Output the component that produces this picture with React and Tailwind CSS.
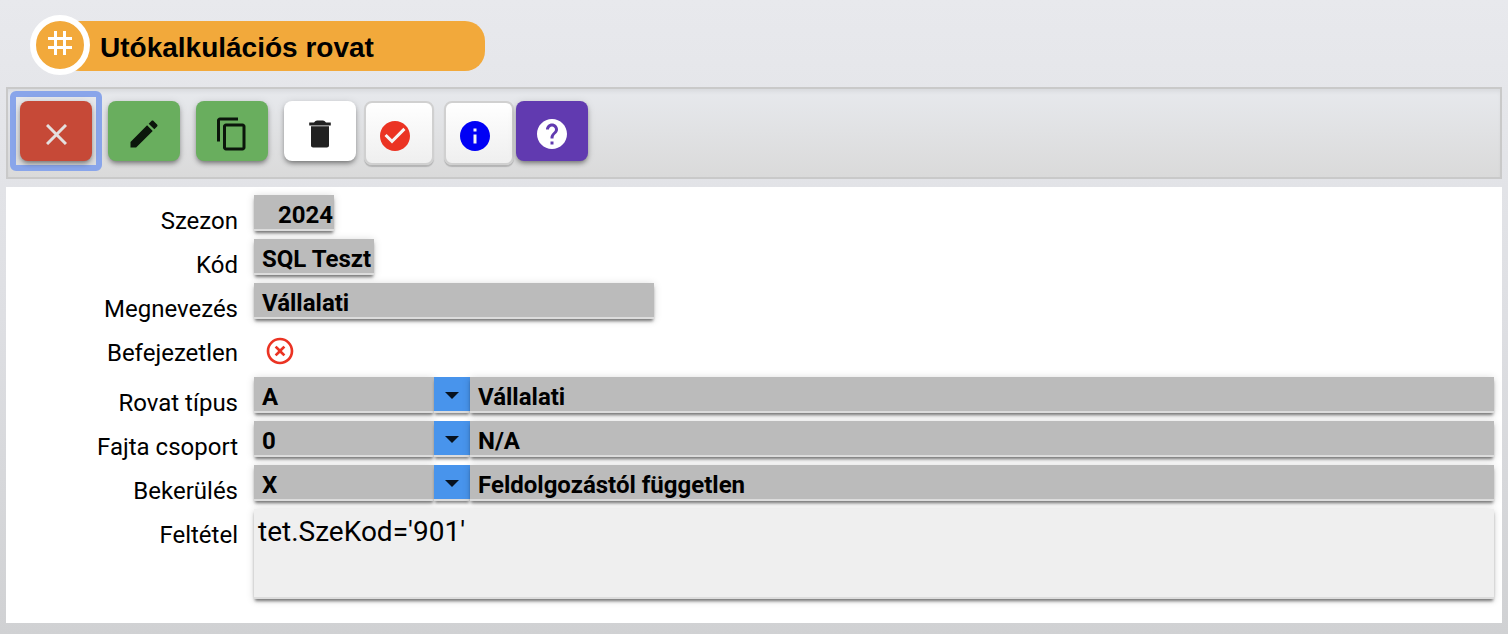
import React from "react";

const FIELD_SHADOW = "shadow-[0_3px_3px_-1px_rgba(0,0,0,0.5),0_1px_8px_rgba(0,0,0,0.16)]";

const ICONS = {
  edit: "M3 17.25V21h3.75L17.81 9.94l-3.75-3.75L3 17.25zM20.71 7.04c.39-.39.39-1.02 0-1.41l-2.34-2.34c-.39-.39-1.02-.39-1.41 0l-1.83 1.83 3.75 3.75 1.83-1.83z",
  copy: "M16 1H4c-1.1 0-2 .9-2 2v14h2V3h12V1zm3 4H8c-1.1 0-2 .9-2 2v14c0 1.1.9 2 2 2h11c1.1 0 2-.9 2-2V7c0-1.1-.9-2-2-2zm0 16H8V7h11v14z",
  trash: "M6 19.700c0 .8.6 1.300 1.400 1.300h9.200c.8 0 1.400-.5 1.400-1.300V6.900H6v12.800zM19.200 4.400H16C15.400 3.500 14.600 3 14 3h-4c-.6 0-1.400.5-2 1.400H4.800v1.900h14.400V4.400z",
  check: "M12 2C6.48 2 2 6.48 2 12s4.48 10 10 10 10-4.480 10-10S17.520 2 12 2zm-2 15l-5-5 1.410-1.410L10 14.170l7.590-7.590L19 8l-9 9z",
  info: "M12 2C6.480 2 2 6.480 2 12s4.480 10 10 10 10-4.480 10-10S17.520 2 12 2zm1 15h-2v-6h2v6zm0-8h-2V7h2v2z",
  help: "M12 2C6.480 2 2 6.480 2 12s4.480 10 10 10 10-4.480 10-10S17.520 2 12 2zm1 17h-2v-2h2v2zm2.070-7.750l-.9.920C13.450 12.900 13 13.500 13 15h-2v-.5c0-1.100.450-2.100 1.170-2.830l1.240-1.260c.370-.360.590-.860.590-1.410 0-1.100-.9-2-2-2s-2 .9-2 2H8c0-2.210 1.790-4 4-4s4 1.790 4 4c0 .880-.360 1.680-.930 2.250z",
  off: "M14.590 8L12 10.590 9.410 8 8 9.410 10.590 12 8 14.590 9.410 16 12 13.410 14.590 16 16 14.590 13.410 12 16 9.410 14.590 8zM12 2C6.470 2 2 6.470 2 12s4.470 10 10 10 10-4.470 10-10S17.530 2 12 2zm0 18c-4.410 0-8-3.590-8-8s3.590-8 8-8 8 3.590 8 8-3.590 8-8 8z",
};

function Icon({ name, className }) {
  return (
    <svg viewBox="0 0 24 24" fill="currentColor" className={className}>
      <path d={ICONS[name]} />
    </svg>
  );
}

function ToolButton({ label, className, children }) {
  return (
    <button
      aria-label={label}
      className={`flex h-[60px] w-[72px] shrink-0 items-center justify-center rounded-lg pt-1.5 shadow-[0_3px_5px_-1px_rgba(0,0,0,0.45),0_1px_8px_rgba(0,0,0,0.1)] ${className}`}
    >
      {children}
    </button>
  );
}

function OutlineButton({ label, className, children }) {
  return (
    <button
      aria-label={label}
      className={`flex h-[64px] w-[70px] shrink-0 items-center rounded-lg border-2 border-[#d0d0d0] bg-linear-to-b from-white to-[#efefef] pt-1.5 pl-[11px] shadow-[0_2px_1px_rgba(0,0,0,0.18)] ${className}`}
    >
      {children}
    </button>
  );
}

function Row({ label, className = "h-11", children }) {
  return (
    <div className={`flex ${className}`}>
      <div className="w-[232px] shrink-0 pt-[10px] text-right text-[24px] leading-8">{label}</div>
      <div className="ml-4 mr-2 flex flex-1">{children}</div>
    </div>
  );
}

function Field({ className, children }) {
  return (
    <div
      className={`h-9 border-b-2 border-[#dcdcdc] bg-[#bbbbbb] text-[24px] leading-[40px] font-bold whitespace-nowrap ${FIELD_SHADOW} ${className}`}
    >
      {children}
    </div>
  );
}

function Lookup({ code, name }) {
  return (
    <>
      <Field className="w-[180px] pl-2">{code}</Field>
      <button
        aria-label={name}
        className="flex h-9 w-9 shrink-0 items-center justify-center border-b-2 border-[#dcdcdc] bg-[#4894ec] pt-[3px] shadow-[0_3px_3px_-1px_rgba(0,0,0,0.5)]"
      >
        <svg viewBox="0 0 14 7" className="h-[7px] w-[14px]">
          <path d="M0 0h14L7 7z" fill="#07121f" />
        </svg>
      </button>
      <Field className="flex-1 pl-2">{name}</Field>
    </>
  );
}

export default function App() {
  return (
    <div className="h-[634px] w-full overflow-hidden bg-linear-to-b from-[#e8e9ed] via-[#dedfe3] to-[#d0d1d3] px-1.5 font-['Roboto',sans-serif] text-black">
      <header className="flex h-[87px] pt-[15px] pl-6">
        <div className="z-10 flex h-[60px] w-[60px] shrink-0 justify-center rounded-full border-[6px] border-white bg-[#f2a93b] pt-[10px]">
          <svg viewBox="0 0 24 24" className="h-6 w-6">
            <path d="M6 0h3v24H6zM15 0h3v24h-3zM0 6h24v3H0zM0 15h24v3H0z" fill="white" />
          </svg>
        </div>
        <h1 className="mt-1.5 -ml-[30px] h-[50px] w-[425px] rounded-[20px] bg-[#f2a93b] pl-10 font-['Liberation_Sans',sans-serif] text-[28px] leading-[54px] font-bold">
          Utókalkulációs rovat
        </h1>
      </header>

      <div className="flex h-[92px] items-start border-2 border-[#c9c9c9] bg-linear-to-b from-[#e7e9ed] to-[#dadada] pt-[2px] pl-[2px] shadow-[inset_0_4px_5px_-2px_rgba(0,0,0,0.08)]">
        <div className="h-20 w-[92px] shrink-0 rounded-[6px] border-[6px] border-[#89a5ea] p-1">
          <ToolButton label="Bezárás" className="bg-[#c64937]">
            <svg viewBox="0 0 21 21" className="h-[21px] w-[21px]">
              <path d="M1 1l19 19M20 1L1 20" stroke="#e4e0df" strokeWidth="3" />
            </svg>
          </ToolButton>
        </div>
        <div className="flex pt-[10px] pl-1.5">
          <ToolButton label="Szerkesztés" className="bg-[#69ae5e] text-[#0b160b]">
            <Icon name="edit" className="h-9 w-9" />
          </ToolButton>
          <ToolButton label="Másolás" className="ml-4 bg-[#69ae5e] text-[#0b160b]">
            <Icon name="copy" className="h-9 w-9" />
          </ToolButton>
          <ToolButton label="Törlés" className="ml-4 bg-white text-[#212121]">
            <Icon name="trash" className="h-9 w-9" />
          </ToolButton>
          <OutlineButton label="Ellenőrzés" className="ml-2 text-[#eb3323]">
            <Icon name="check" className="h-9 w-9" />
          </OutlineButton>
          <OutlineButton label="Információ" className="ml-[10px] text-[#0000f5]">
            <Icon name="info" className="h-9 w-9" />
          </OutlineButton>
          <ToolButton label="Súgó" className="ml-[2px] bg-[#613ab0] text-white">
            <Icon name="help" className="h-9 w-9" />
          </ToolButton>
        </div>
      </div>

      <main className="mt-2 h-[436px] bg-white pt-2">
        <Row label="Szezon">
          <Field className="w-20 pr-px text-right">2024</Field>
        </Row>
        <Row label="Kód">
          <Field className="w-[120px] pl-2">SQL Teszt</Field>
        </Row>
        <Row label="Megnevezés">
          <Field className="w-[400px] pl-2">Vállalati</Field>
        </Row>
        <Row label="Befejezetlen" className="h-[50px]">
          <Icon name="off" className="mt-2 ml-[10px] h-8 w-8 text-[#eb3323]" />
        </Row>
        <Row label="Rovat típus">
          <Lookup code="A" name="Vállalati" />
        </Row>
        <Row label="Fajta csoport">
          <Lookup code="0" name="N/A" />
        </Row>
        <Row label="Bekerülés">
          <Lookup code="X" name="Feldolgozástól független" />
        </Row>
        <Row label="Feltétel" className="h-[90px]">
          <div className={`flex-1 border-b-2 border-[#dcdcdc] bg-[#efefef] pt-[5px] pl-1 text-[28px] leading-9 ${FIELD_SHADOW}`}>
            tet.SzeKod='901'
          </div>
        </Row>
      </main>
    </div>
  );
}
